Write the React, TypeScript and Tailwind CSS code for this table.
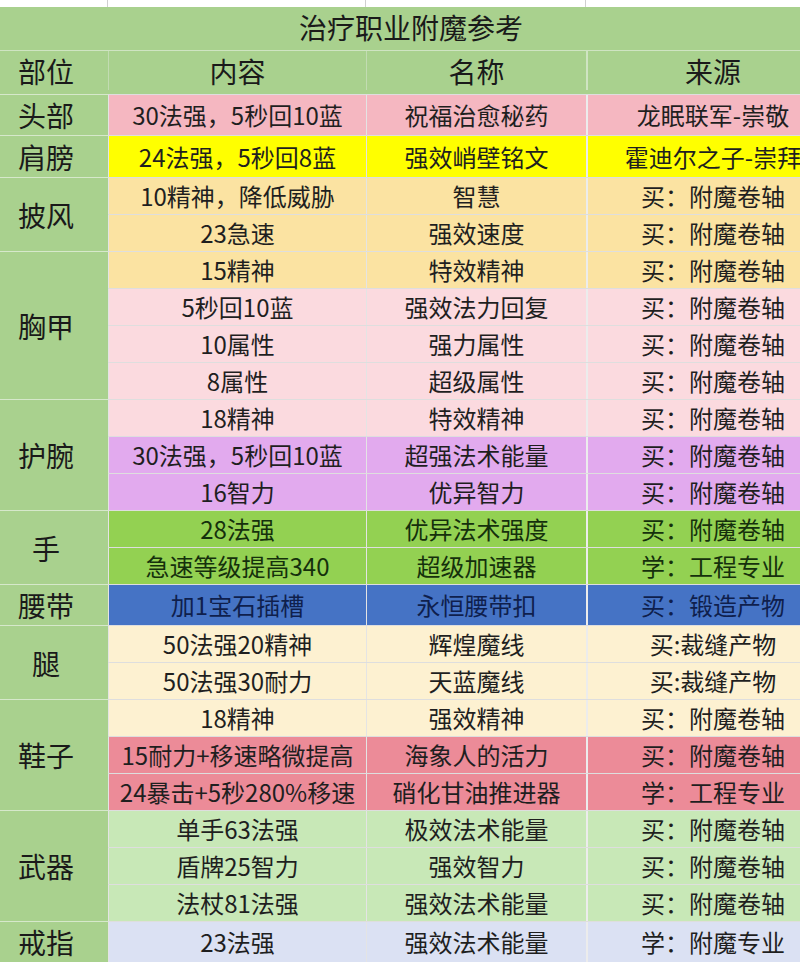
type Row = { bg: string; ink?: string; cells: [string, string, string] };
type Group = { part: string; rows: Row[]; h?: string };

const ROW_H = 'h-[37px]';

const GROUPS: Group[] = [
  {
    part: '头部',
    h: 'h-[41px]',
    rows: [{ bg: 'bg-[#f5b7c1]', cells: ['30法强，5秒回10蓝', '祝福治愈秘药', '龙眠联军-崇敬'] }],
  },
  {
    part: '肩膀',
    h: 'h-[42px]',
    rows: [{ bg: 'bg-[#ffff00]', cells: ['24法强，5秒回8蓝', '强效峭壁铭文', '霍迪尔之子-崇拜'] }],
  },
  {
    part: '披风',
    rows: [
      { bg: 'bg-[#fbe3a2]', cells: ['10精神，降低威胁', '智慧', '买：附魔卷轴'] },
      { bg: 'bg-[#fbe3a2]', cells: ['23急速', '强效速度', '买：附魔卷轴'] },
    ],
  },
  {
    part: '胸甲',
    rows: [
      { bg: 'bg-[#fbe3a2]', cells: ['15精神', '特效精神', '买：附魔卷轴'] },
      { bg: 'bg-[#fbdadf]', cells: ['5秒回10蓝', '强效法力回复', '买：附魔卷轴'] },
      { bg: 'bg-[#fbdadf]', cells: ['10属性', '强力属性', '买：附魔卷轴'] },
      { bg: 'bg-[#fbdadf]', cells: ['8属性', '超级属性', '买：附魔卷轴'] },
    ],
  },
  {
    part: '护腕',
    rows: [
      { bg: 'bg-[#fbdadf]', cells: ['18精神', '特效精神', '买：附魔卷轴'] },
      { bg: 'bg-[#e2aaee]', cells: ['30法强，5秒回10蓝', '超强法术能量', '买：附魔卷轴'] },
      { bg: 'bg-[#e2aaee]', cells: ['16智力', '优异智力', '买：附魔卷轴'] },
    ],
  },
  {
    part: '手',
    rows: [
      { bg: 'bg-[#93d152]', ink: 'text-[#15300c]', cells: ['28法强', '优异法术强度', '买：附魔卷轴'] },
      { bg: 'bg-[#93d152]', ink: 'text-[#15300c]', cells: ['急速等级提高340', '超级加速器', '学：工程专业'] },
    ],
  },
  {
    part: '腰带',
    h: 'h-[41px]',
    rows: [
      { bg: 'bg-[#4573c5]', ink: 'text-[#0f1f4d]', cells: ['加1宝石插槽', '永恒腰带扣', '买：锻造产物'] },
    ],
  },
  {
    part: '腿',
    rows: [
      { bg: 'bg-[#fdf1d1]', cells: ['50法强20精神', '辉煌魔线', '买:裁缝产物'] },
      { bg: 'bg-[#fdf1d1]', cells: ['50法强30耐力', '天蓝魔线', '买:裁缝产物'] },
    ],
  },
  {
    part: '鞋子',
    rows: [
      { bg: 'bg-[#fdf1d1]', cells: ['18精神', '强效精神', '买：附魔卷轴'] },
      { bg: 'bg-[#ec8b98]', cells: ['15耐力+移速略微提高', '海象人的活力', '买：附魔卷轴'] },
      { bg: 'bg-[#ec8b98]', cells: ['24暴击+5秒280%移速', '硝化甘油推进器', '学：工程专业'] },
    ],
  },
  {
    part: '武器',
    rows: [
      { bg: 'bg-[#c8e8b7]', cells: ['单手63法强', '极效法术能量', '买：附魔卷轴'] },
      { bg: 'bg-[#c8e8b7]', cells: ['盾牌25智力', '强效智力', '买：附魔卷轴'] },
      { bg: 'bg-[#c8e8b7]', cells: ['法杖81法强', '强效法术能量', '买：附魔卷轴'] },
    ],
  },
  {
    part: '戒指',
    h: 'h-[41px]',
    rows: [{ bg: 'bg-[#dbe1f3]', cells: ['23法强', '强效法术能量', '学：附魔专业'] }],
  },
];

function DataRow({ row, h }: { row: Row; h: string }) {
  const ink = row.ink ?? 'text-[#1f1f1f]';
  return (
    <div
      className={`grid grid-cols-[258px_220px_252px] border-t border-[#dedede] leading-none ${h} ${row.bg} ${ink}`}
    >
      <div className="flex items-center justify-center whitespace-nowrap border-l border-[#e4e4e4]">
        {row.cells[0]}
      </div>
      <div className="flex items-center justify-center whitespace-nowrap border-l border-[#e4e4e4]">
        {row.cells[1]}
      </div>
      <div className="flex items-center justify-center whitespace-nowrap border-l-2 border-[#ececec]">
        {row.cells[2]}
      </div>
    </div>
  );
}

export default function App() {
  return (
    <div className="h-[962px] w-[800px] overflow-hidden bg-white font-['Noto_Sans_CJK_SC','Noto_Sans',sans-serif]">
      <div className="ml-[-16px] w-[854px]">
        <div className="grid h-[7px] grid-cols-[124px_258px_220px_252px] bg-white">
          <div className="border-r border-[#d0d0d0]" />
          <div className="border-r border-[#d0d0d0]" />
          <div className="border-r border-[#d0d0d0]" />
          <div />
        </div>

        <div className="flex h-[43px] items-center justify-center bg-[#a9d18e] pb-1 text-[28px] leading-none text-[#1a1a1a]">
          治疗职业附魔参考
        </div>

        <div className="grid h-[44px] grid-cols-[124px_258px_220px_252px] border-t border-[#cfe4c2] bg-[#a9d18e] pb-1 text-[28px] leading-none text-[#1a1a1a]">
          <div className="flex items-center justify-center px-[16px]">部位</div>
          <div className="flex items-center justify-center border-l border-[#c2dcb2]">内容</div>
          <div className="flex items-center justify-center border-l border-[#c2dcb2]">名称</div>
          <div className="flex items-center justify-center border-l-2 border-[#cfe4c2]">来源</div>
        </div>

        {GROUPS.map((g) => (
          <div key={g.part} className="flex">
            <div className="flex w-[124px] shrink-0 items-center justify-center border-t border-[#d6e8cb] bg-[#a9d18e] px-[16px] text-[28px] leading-none text-[#1a1a1a]">
              {g.part}
            </div>
            <div className="flex flex-col text-[24px]">
              {g.rows.map((r, i) => (
                <DataRow key={i} row={r} h={g.h ?? ROW_H} />
              ))}
            </div>
          </div>
        ))}
      </div>
    </div>
  );
}
